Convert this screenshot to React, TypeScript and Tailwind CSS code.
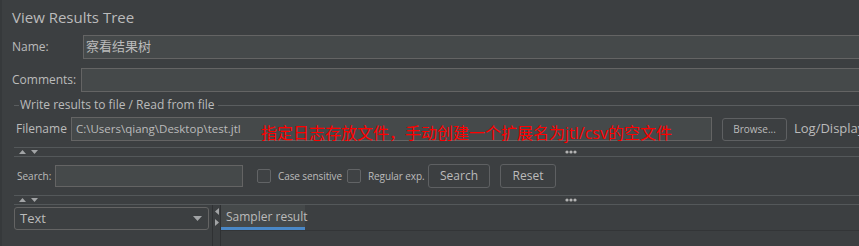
import React from "react";

function Arrows() {
  return (
    <svg width="20" height="6" viewBox="0 0 20 6" className="block">
      <path d="M0 5 L3.5 1 L7 5 Z" fill="#a2a4a6" />
      <path d="M12 1 L19 1 L15.5 5 Z" fill="#a2a4a6" />
    </svg>
  );
}

function Dots() {
  return (
    <svg width="12" height="4" viewBox="0 0 12 4" className="block">
      <circle cx="2" cy="2" r="1.6" fill="#b3b3b3" />
      <circle cx="6" cy="2" r="1.6" fill="#b3b3b3" />
      <circle cx="10" cy="2" r="1.6" fill="#b3b3b3" />
    </svg>
  );
}

function Splitter() {
  return (
    <div className="ml-3 flex h-[10px] flex-col border-y border-[#54585a]">
      <div className="relative flex h-full items-center pl-[5px]">
        <Arrows />
        <div className="absolute left-[551px] top-[2px]">
          <Dots />
        </div>
      </div>
    </div>
  );
}

function Checkbox({ label, width }: { label: string; width: string }) {
  return (
    <div className={`flex shrink-0 items-center gap-[7px] ${width}`}>
      <div className="h-[14px] w-[14px] shrink-0 rounded-[2px] border border-[#626466] bg-[#3f4244]" />
      <span className="whitespace-nowrap text-[10px] tracking-[-0.1px] text-[#bbbbbb]">{label}</span>
    </div>
  );
}

export default function App() {
  return (
    <div
      className="h-[246px] w-[859px] overflow-hidden border-l-2 border-[#36393b] bg-[#3c3f41] text-[#bbbbbb]"
      style={{ fontFamily: '"Open Sans", "Noto Sans CJK SC", sans-serif' }}
    >
      {/* title */}
      <div className="flex h-[35px] items-center pl-[10px] pb-[1px] text-[15px]">View Results Tree</div>

      {/* name */}
      <div className="flex h-[24px] items-center pl-[10px]">
        <span className="w-[71px] shrink-0 text-[12px]">Name:</span>
        <div className="flex h-full flex-1 items-center border-y border-l border-[#646464] bg-[#45494a] pl-[2px] text-[13px]">
          察看结果树
        </div>
      </div>

      {/* comments */}
      <div className="mt-[9px] flex h-[24px] items-center pl-[10px]">
        <span className="w-[69px] shrink-0 text-[12px]">Comments:</span>
        <div className="h-full flex-1 border-y border-l border-[#646464] bg-[#45494a]" />
      </div>

      {/* group title */}
      <div className="mt-[6px] flex h-[14px] items-center pl-[12px]">
        <div className="w-[5px] shrink-0 border-t border-[#5a5d5f]" />
        <span className="shrink-0 whitespace-nowrap px-[1px] text-[12px] leading-none">
          Write results to file / Read from file
        </span>
        <div className="ml-[2px] flex-1 border-t border-[#5a5d5f]" />
      </div>

      {/* filename */}
      <div className="mt-[5px] flex h-[24px] items-center pl-[14px]">
        <span className="w-[55px] shrink-0 text-[12px]">Filename</span>
        <div className="relative flex h-full w-[641px] shrink-0 items-center border border-[#646464] bg-[#45494a] pl-[4px] text-[11.5px]">
          C:\Users\qiang\Desktop\test.jtl
          <span className="absolute left-[189px] top-[5px] whitespace-nowrap text-[16px] leading-[20px] text-[#ff0000]">
            指定日志存放文件，手动创建一个扩展名为jtl/csv的空文件
          </span>
        </div>
        <div className="ml-[10px] flex h-[23px] w-[65px] shrink-0 items-center justify-center rounded-[3px] border border-[#5e6062] bg-[#3c3f41] text-[10px]">
          Browse...
        </div>
        <span className="ml-[7px] shrink-0 whitespace-nowrap text-[13px]">Log/Display</span>
      </div>

      <div className="mt-[6px]">
        <Splitter />
      </div>

      {/* search */}
      <div className="flex h-[38px] items-center pl-[15px]">
        <span className="w-[38px] shrink-0 whitespace-nowrap text-[10px]">Search:</span>
        <div className="h-[22px] w-[188px] shrink-0 border border-[#646464] bg-[#45494a]" />
        <div className="ml-[14px]">
          <Checkbox label="Case sensitive" width="w-[90px]" />
        </div>
        <div className="ml-0">
          <Checkbox label="Regular exp." width="w-[81px]" />
        </div>
        <div className="flex h-[24px] w-[62px] shrink-0 items-center justify-center rounded-[3px] border border-[#5e6062] text-[12px]">
          Search
        </div>
        <div className="ml-[10px] flex h-[24px] w-[56px] shrink-0 items-center justify-center rounded-[3px] border border-[#5e6062] text-[12px]">
          Reset
        </div>
      </div>

      <Splitter />

      {/* bottom */}
      <div className="flex h-[42px] pl-[12px]">
        <div className="shrink-0 pt-[2px]">
          <div className="flex h-[23px] w-[195px] items-center justify-between rounded-[3px] border border-[#646464] bg-[#3c3f41] pl-[5px] pr-[6px] text-[13px]">
            <span>Text</span>
            <svg width="9" height="5" viewBox="0 0 9 5">
              <path d="M0 0 L9 0 L4.5 5 Z" fill="#a2a4a6" />
            </svg>
          </div>
        </div>
        <div className="ml-[3px] flex w-[9px] shrink-0 flex-col items-center gap-[4px] border-x border-[#2f3133] pt-[3px]">
          <svg width="4" height="7" viewBox="0 0 4 7">
            <path d="M4 0 L4 7 L0 3.5 Z" fill="#a2a4a6" />
          </svg>
          <svg width="4" height="7" viewBox="0 0 4 7">
            <path d="M0 0 L0 7 L4 3.5 Z" fill="#a2a4a6" />
          </svg>
        </div>
        <div className="flex-1">
          <div className="flex h-[26px] items-start border-b border-[#333537]">
            <div className="flex h-full w-[84px] shrink-0 items-center whitespace-nowrap border-b-[3px] border-[#4a88c7] bg-[#45494a] pl-[5px] pt-[1px] text-[12px]">
              Sampler result
            </div>
          </div>
        </div>
      </div>
    </div>
  );
}
